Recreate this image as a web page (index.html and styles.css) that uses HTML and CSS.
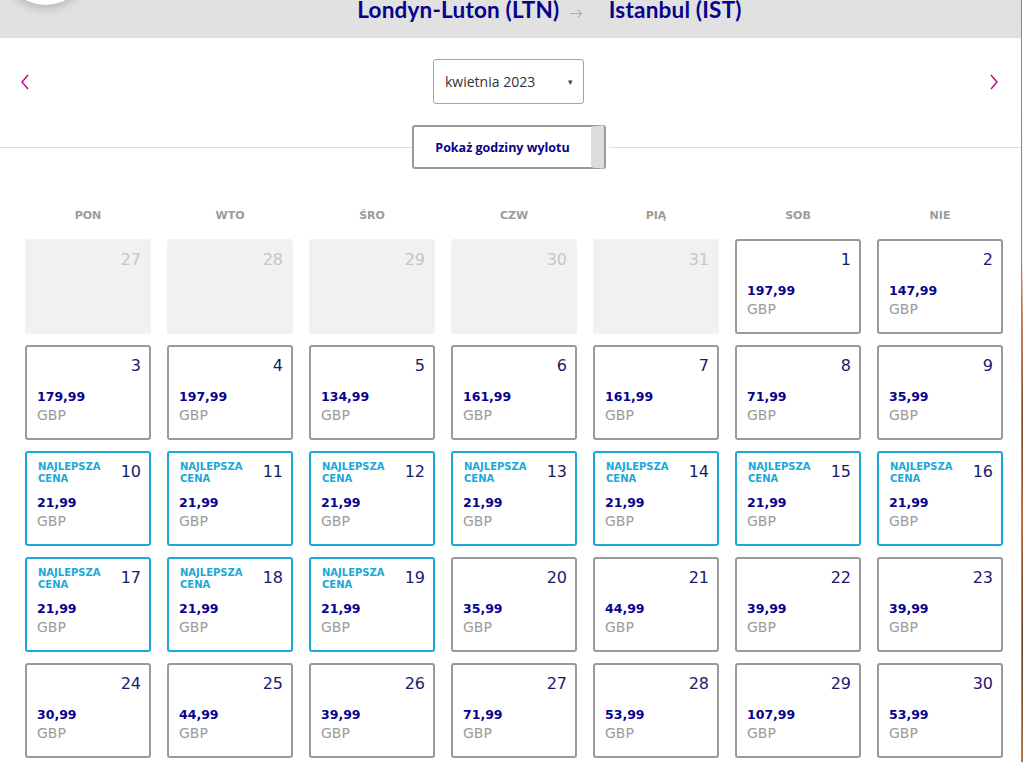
FILE: index.html
```html
<!DOCTYPE html>
<html lang="pl">
<head>
  <meta charset="UTF-8" />
  <meta name="viewport" content="width=device-width, initial-scale=1.0"/>
  <title>Londyn-Luton - Istanbul</title>
  <link rel="stylesheet" href="styles.css">
</head>
<body>
  <div class="page">
    <header class="topbar">
      <div class="avatar"></div>
      <h1 class="route">Londyn-Luton (LTN) <span class="arrow">&rarr;</span> Istanbul (IST)</h1>
    </header>

    <div class="month-row">
      <button class="nav-btn" aria-label="Poprzedni miesiąc">
        <svg width="10" height="16" viewBox="0 0 10 16"><path d="M8 1 L2 8 L8 15" fill="none" stroke="#c6007e" stroke-width="1.4"/></svg>
      </button>
      <div class="month-select">
        <span>kwietnia 2023</span>
        <span class="caret">&#9662;</span>
      </div>
      <button class="nav-btn" aria-label="Następny miesiąc">
        <svg width="10" height="16" viewBox="0 0 10 16"><path d="M2 1 L8 8 L2 15" fill="none" stroke="#c6007e" stroke-width="1.4"/></svg>
      </button>
    </div>

    <div class="hours-row">
      <div class="rule"></div>
      <button class="hours-btn"><span>Pokaż godziny wylotu</span></button>
      <div class="rule"></div>
    </div>

    <div class="weekdays">
      <div>PON</div><div>WTO</div><div>ŚRO</div><div>CZW</div><div>PIĄ</div><div>SOB</div><div>NIE</div>
    </div>

    <div class="calendar">
      <div class="day off"><div class="day-top"><span class="num">27</span></div></div>
      <div class="day off"><div class="day-top"><span class="num">28</span></div></div>
      <div class="day off"><div class="day-top"><span class="num">29</span></div></div>
      <div class="day off"><div class="day-top"><span class="num">30</span></div></div>
      <div class="day off"><div class="day-top"><span class="num">31</span></div></div>
      <div class="day"><div class="day-top"><span class="num">1</span></div><div class="price">197,99</div><div class="cur">GBP</div></div>
      <div class="day"><div class="day-top"><span class="num">2</span></div><div class="price">147,99</div><div class="cur">GBP</div></div>

      <div class="day"><div class="day-top"><span class="num">3</span></div><div class="price">179,99</div><div class="cur">GBP</div></div>
      <div class="day"><div class="day-top"><span class="num">4</span></div><div class="price">197,99</div><div class="cur">GBP</div></div>
      <div class="day"><div class="day-top"><span class="num">5</span></div><div class="price">134,99</div><div class="cur">GBP</div></div>
      <div class="day"><div class="day-top"><span class="num">6</span></div><div class="price">161,99</div><div class="cur">GBP</div></div>
      <div class="day"><div class="day-top"><span class="num">7</span></div><div class="price">161,99</div><div class="cur">GBP</div></div>
      <div class="day"><div class="day-top"><span class="num">8</span></div><div class="price">71,99</div><div class="cur">GBP</div></div>
      <div class="day"><div class="day-top"><span class="num">9</span></div><div class="price">35,99</div><div class="cur">GBP</div></div>

      <div class="day best"><div class="day-top"><span class="tag">Najlepsza<br>cena</span><span class="num">10</span></div><div class="price">21,99</div><div class="cur">GBP</div></div>
      <div class="day best"><div class="day-top"><span class="tag">Najlepsza<br>cena</span><span class="num">11</span></div><div class="price">21,99</div><div class="cur">GBP</div></div>
      <div class="day best"><div class="day-top"><span class="tag">Najlepsza<br>cena</span><span class="num">12</span></div><div class="price">21,99</div><div class="cur">GBP</div></div>
      <div class="day best"><div class="day-top"><span class="tag">Najlepsza<br>cena</span><span class="num">13</span></div><div class="price">21,99</div><div class="cur">GBP</div></div>
      <div class="day best"><div class="day-top"><span class="tag">Najlepsza<br>cena</span><span class="num">14</span></div><div class="price">21,99</div><div class="cur">GBP</div></div>
      <div class="day best"><div class="day-top"><span class="tag">Najlepsza<br>cena</span><span class="num">15</span></div><div class="price">21,99</div><div class="cur">GBP</div></div>
      <div class="day best"><div class="day-top"><span class="tag">Najlepsza<br>cena</span><span class="num">16</span></div><div class="price">21,99</div><div class="cur">GBP</div></div>

      <div class="day best"><div class="day-top"><span class="tag">Najlepsza<br>cena</span><span class="num">17</span></div><div class="price">21,99</div><div class="cur">GBP</div></div>
      <div class="day best"><div class="day-top"><span class="tag">Najlepsza<br>cena</span><span class="num">18</span></div><div class="price">21,99</div><div class="cur">GBP</div></div>
      <div class="day best"><div class="day-top"><span class="tag">Najlepsza<br>cena</span><span class="num">19</span></div><div class="price">21,99</div><div class="cur">GBP</div></div>
      <div class="day"><div class="day-top"><span class="num">20</span></div><div class="price">35,99</div><div class="cur">GBP</div></div>
      <div class="day"><div class="day-top"><span class="num">21</span></div><div class="price">44,99</div><div class="cur">GBP</div></div>
      <div class="day"><div class="day-top"><span class="num">22</span></div><div class="price">39,99</div><div class="cur">GBP</div></div>
      <div class="day"><div class="day-top"><span class="num">23</span></div><div class="price">39,99</div><div class="cur">GBP</div></div>

      <div class="day"><div class="day-top"><span class="num">24</span></div><div class="price">30,99</div><div class="cur">GBP</div></div>
      <div class="day"><div class="day-top"><span class="num">25</span></div><div class="price">44,99</div><div class="cur">GBP</div></div>
      <div class="day"><div class="day-top"><span class="num">26</span></div><div class="price">39,99</div><div class="cur">GBP</div></div>
      <div class="day"><div class="day-top"><span class="num">27</span></div><div class="price">71,99</div><div class="cur">GBP</div></div>
      <div class="day"><div class="day-top"><span class="num">28</span></div><div class="price">53,99</div><div class="cur">GBP</div></div>
      <div class="day"><div class="day-top"><span class="num">29</span></div><div class="price">107,99</div><div class="cur">GBP</div></div>
      <div class="day"><div class="day-top"><span class="num">30</span></div><div class="price">53,99</div><div class="cur">GBP</div></div>
    </div>
  </div>
  <div class="edge"></div>
</body>
</html>
```

FILE: styles.css
```css
* {
  margin: 0;
  padding: 0;
  box-sizing: border-box;
}

body {
  display: flex;
  height: 762px;
  overflow: hidden;
  background: #fff;
  font-family: "DejaVu Sans", Verdana, sans-serif;
}

.page {
  width: 1021px;
  flex-shrink: 0;
}

.edge {
  flex: 1;
  border-left: 1px solid #3fa1dc;
  background: linear-gradient(#ffffff 0, #f4f4f4 260px, #c9835f 320px, #7a4a2e 420px, #b86a3c 520px, #5b3b25 640px, #a8743f 762px);
}

/* top bar */
.topbar {
  position: relative;
  height: 38px;
  background: #e1e1e1;
  text-align: center;
}

.avatar {
  position: absolute;
  left: 3px;
  top: -80px;
  width: 85px;
  height: 85px;
  border-radius: 50%;
  background: #fff;
  box-shadow: 0 4px 10px rgba(0, 0, 0, 0.18);
}

.route {
  font-family: Lato, "Open Sans", sans-serif;
  font-weight: 700;
  font-size: 22.5px;
  letter-spacing: 0.2px;
  line-height: 18px;
  padding-top: 1px;
  color: #06038d;
  padding-left: 78px;
  white-space: nowrap;
}

.route .arrow {
  font-weight: 400;
  font-size: 14px;
  letter-spacing: 0;
  color: #a9a6d0;
  margin: 0 20px 0 4px;
}

/* month selector */
.month-row {
  display: flex;
  align-items: center;
  justify-content: space-between;
  padding: 21px 20px 0 20px;
}

.nav-btn {
  border: none;
  background: none;
  width: 12px;
  height: 45px;
  display: flex;
  align-items: center;
  cursor: pointer;
}

.month-select {
  width: 151px;
  height: 45px;
  border: 1px solid #a3a3a3;
  border-radius: 3px;
  display: flex;
  align-items: center;
  justify-content: space-between;
  padding: 0 10px 0 11px;
  font-family: "Open Sans", sans-serif;
  font-size: 14px;
  color: #333;
  margin-right: 4px;
}

.caret {
  font-size: 9px;
  color: #444;
}

/* hours toggle */
.hours-row {
  display: flex;
  align-items: center;
  margin-top: 21px;
}

.rule {
  flex: 1;
  height: 1px;
  background: #dddddd;
}

.hours-btn {
  width: 192px;
  height: 44px;
  border: 2px solid #9a9a9a;
  border-radius: 3px;
  background: #fff;
  border-right: 13px solid #dcdcdc;
  box-shadow: 2px 0 0 #9a9a9a;
  margin-right: 5px;
  font-family: "Open Sans", sans-serif;
  font-weight: 700;
  font-size: 12.5px;
  color: #06038d;
  cursor: pointer;
}

/* calendar */
.weekdays,
.calendar {
  display: grid;
  grid-template-columns: repeat(7, 126px);
  column-gap: 16px;
  padding-left: 25px;
}

.weekdays {
  margin-top: 39px;
  font-size: 11px;
  font-weight: 700;
  line-height: 16px;
  color: #9b9b9b;
  text-align: center;
}

.calendar {
  margin-top: 15px;
  grid-auto-rows: 95px;
  row-gap: 11px;
}

.day {
  border: 2px solid #9a9a9a;
  border-radius: 3px;
  padding: 9px 8px 0 10px;
}

.day.off {
  border-color: #f1f1f1;
  background: #f1f1f1;
}

.day.best {
  border-color: #1ba8d7;
}

.day-top {
  display: flex;
  justify-content: space-between;
  align-items: flex-start;
  height: 32px;
}

.num {
  margin-left: auto;
  font-size: 16px;
  line-height: 20px;
  color: #1b1a6e;
}

.day.off .num {
  color: #c6c6c6;
}

.tag {
  font-size: 10px;
  font-weight: 700;
  line-height: 12px;
  color: #1ba8d7;
  text-transform: uppercase;
  padding-left: 1px;
  margin-top: -1px;
}

.price {
  font-size: 12.5px;
  font-weight: 700;
  line-height: 18px;
  color: #06038d;
}

.cur {
  font-size: 14px;
  line-height: 18px;
  color: #9b9b9b;
}
```
